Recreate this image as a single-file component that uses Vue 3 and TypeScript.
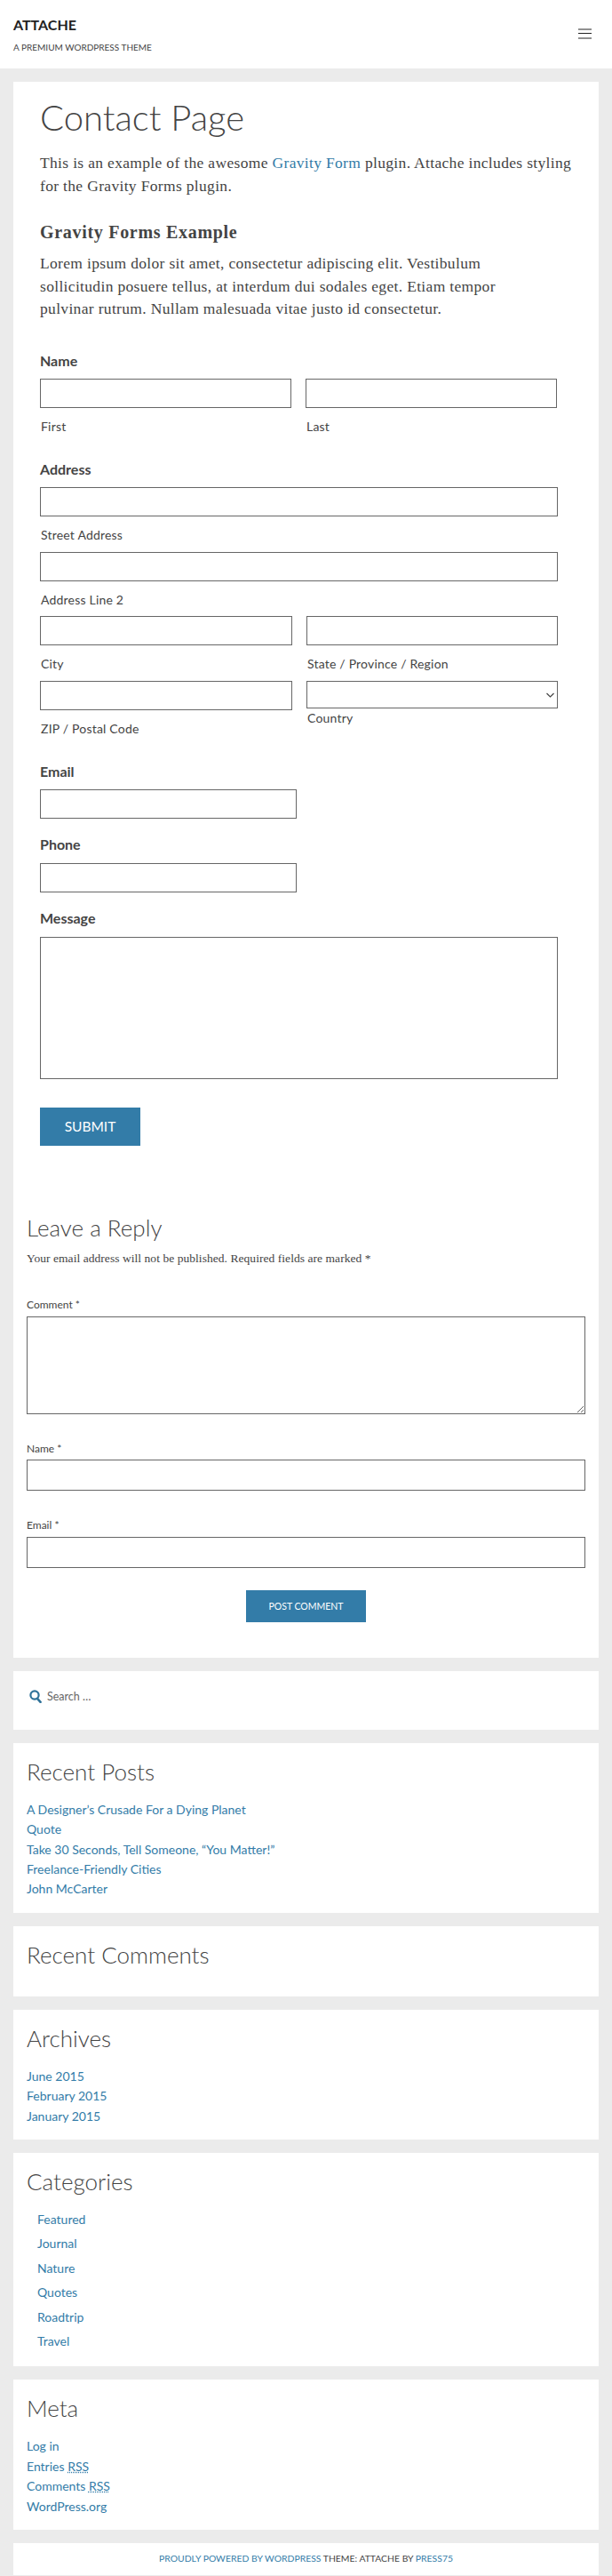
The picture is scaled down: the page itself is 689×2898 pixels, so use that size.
<script setup lang="ts">
const recentPosts: string[] = [
  'A Designer’s Crusade For a Dying Planet',
  'Quote',
  'Take 30 Seconds, Tell Someone, “You Matter!”',
  'Freelance-Friendly Cities',
  'John McCarter'
]
const archives: string[] = ['June 2015', 'February 2015', 'January 2015']
const categories: string[] = ['Featured', 'Journal', 'Nature', 'Quotes', 'Roadtrip', 'Travel']
</script>

<template>
  <div class="page">
    <header class="site-header">
      <div>
        <div class="site-title">ATTACHE</div>
        <div class="site-tagline">A PREMIUM WORDPRESS THEME</div>
      </div>
      <svg class="menu-icon" width="15" height="12" viewBox="0 0 15 12">
        <path d="M0 1h15M0 5.500h15M0 11h15" stroke="#222" fill="none" />
      </svg>
    </header>

    <main class="content">
      <section class="card main-card">
        <article class="entry">
          <h1>Contact Page</h1>
          <p class="intro">
            This is an example of the awesome <a href="#">Gravity Form</a> plugin. Attache includes styling<br />
            for the Gravity Forms plugin.
          </p>
          <h3>Gravity Forms Example</h3>
          <p class="lorem">
            Lorem ipsum dolor sit amet, consectetur adipiscing elit. Vestibulum sollicitudin posuere tellus, at
            interdum dui sodales eget. Etiam tempor pulvinar rutrum. Nullam malesuada vitae justo id consectetur.
          </p>

          <form class="gform" @submit.prevent>
            <!-- Name -->
            <div class="gf-label first">Name</div>
            <div class="two-col name-row">
              <div>
                <input type="text" />
                <div class="sub">First</div>
              </div>
              <div>
                <input type="text" />
                <div class="sub">Last</div>
              </div>
            </div>

            <!-- Address -->
            <div class="gf-label">Address</div>
            <input type="text" />
            <div class="sub">Street Address</div>
            <input class="stacked" type="text" />
            <div class="sub">Address Line 2</div>
            <div class="two-col address-row">
              <div>
                <input type="text" />
                <div class="sub">City</div>
              </div>
              <div>
                <input type="text" />
                <div class="sub">State / Province / Region</div>
              </div>
              <div>
                <input type="text" />
                <div class="sub">ZIP / Postal Code</div>
              </div>
              <div>
                <div class="select-wrap">
                  <select></select>
                  <svg class="chevron" width="9" height="6" viewBox="0 0 9 6">
                    <path d="M.5 1l4 4 4-4" fill="none" stroke="#444" stroke-width="1.200" />
                  </svg>
                </div>
                <div class="sub country">Country</div>
              </div>
            </div>

            <div class="gf-label email-label">Email</div>
            <input class="half" type="text" />
            <div class="gf-label late">Phone</div>
            <input class="half" type="text" />
            <div class="gf-label late">Message</div>
            <textarea class="message"></textarea>
            <button class="submit" type="submit">SUBMIT</button>
          </form>
        </article>

        <div class="comments">
          <h3 class="reply-title">Leave a Reply</h3>
          <p class="notes">Your email address will not be published. Required fields are marked *</p>
          <label class="c-label comment-label">Comment *</label>
          <textarea class="comment-box"></textarea>
          <label class="c-label name-label">Name *</label>
          <input class="c-input" type="text" />
          <label class="c-label mail-label">Email *</label>
          <input class="c-input" type="text" />
          <div class="c-submit">
            <button type="button">POST COMMENT</button>
          </div>
        </div>
      </section>

      <section class="card search-card">
        <svg class="search-icon" width="14" height="15" viewBox="0 0 14 15">
          <circle cx="6" cy="6" r="4.600" fill="none" stroke="#2f7299" stroke-width="2.200" />
          <path d="M9 9.800l3.600 4" stroke="#2f7299" stroke-width="2.600" stroke-linecap="round" />
        </svg>
        <span>Search …</span>
      </section>

      <section class="card widget">
        <h2>Recent Posts</h2>
        <ul>
          <li v-for="post in recentPosts" :key="post"><a href="#">{{ post }}</a></li>
        </ul>
      </section>

      <section class="card widget no-list">
        <h2>Recent Comments</h2>
      </section>

      <section class="card widget">
        <h2>Archives</h2>
        <ul>
          <li v-for="month in archives" :key="month"><a href="#">{{ month }}</a></li>
        </ul>
      </section>

      <section class="card widget">
        <h2>Categories</h2>
        <ul class="cats">
          <li v-for="cat in categories" :key="cat"><a href="#">{{ cat }}</a></li>
        </ul>
      </section>

      <section class="card widget">
        <h2>Meta</h2>
        <ul>
          <li><a href="#">Log in</a></li>
          <li><a href="#">Entries <abbr>RSS</abbr></a></li>
          <li><a href="#">Comments <abbr>RSS</abbr></a></li>
          <li><a href="#">WordPress.org</a></li>
        </ul>
      </section>

      <footer class="card site-footer">
        <a href="#">PROUDLY POWERED BY WORDPRESS</a> THEME: ATTACHE BY <a href="#">PRESS75</a>
      </footer>
    </main>
  </div>
</template>

<style>
html,
body {
  margin: 0;
  background: #ebebeb;
}
</style>

<style scoped>
.page {
  font-family: Lato, "Liberation Sans", sans-serif;
  color: #444;
}

a {
  color: #337ca8;
  text-decoration: none;
}

input,
select,
textarea {
  display: block;
  box-sizing: border-box;
  width: 100%;
  margin: 0;
  border: 1px solid #666;
  border-radius: 0;
  background: #fff;
}

.site-header {
  height: 77px;
  box-sizing: border-box;
  background: #fff;
  padding: 19px 23px 0 15px;
  display: flex;
  justify-content: space-between;
}

.site-title {
  font-size: 16px;
  font-weight: 700;
  line-height: 18px;
  color: #222;
}

.site-tagline {
  font-size: 10px;
  line-height: 14px;
  margin-top: 9px;
  color: #444;
}

.menu-icon {
  margin-top: 13px;
}

.content {
  padding: 15px 15px 0;
  display: flex;
  flex-direction: column;
  gap: 15px;
}

.card {
  background: #fff;
  box-sizing: border-box;
}

.main-card {
  padding: 0 15px 40px;
}

.entry {
  padding: 16px 15px 0;
}

h1 {
  margin: 0;
  font-size: 40px;
  font-weight: 300;
  line-height: 48px;
  color: #444;
}

.intro,
.lorem {
  font-family: "Liberation Serif", serif;
  font-size: 17.500px;
  letter-spacing: 0.33px;
  line-height: 26px;
  margin: 14px 0 0;
}

.lorem {
  margin-top: 10px;
  width: 560px;
  line-height: 25.600px;
}

.entry h3 {
  font-family: "Liberation Serif", serif;
  font-size: 20px;
  letter-spacing: 0.7px;
  font-weight: 700;
  line-height: 26px;
  margin: 26px 0 0;
}

.gform {
  width: 583px;
}

.gform input {
  height: 33px;
}

.gf-label {
  font-size: 16px;
  font-weight: 700;
  line-height: 22px;
  margin: 16px 0 9px;
}

.gf-label.first {
  margin-top: 34px;
}

.gf-label.email-label {
  margin-top: 27px;
}

.gf-label.late {
  margin: 18px 0 10px;
}

.sub {
  font-size: 14px;
  line-height: 20px;
  margin: 11px 0 0 1px;
  letter-spacing: 0.2px;
}

.stacked {
  margin-top: 9px;
}

.two-col {
  display: grid;
  grid-template-columns: 284px 283px;
  column-gap: 16px;
}

.name-row {
  grid-template-columns: 283px 283px;
  margin-bottom: 27px;
}

.address-row {
  margin-top: 8px;
  row-gap: 9px;
}

.select-wrap {
  position: relative;
}

.select-wrap select {
  height: 31px;
  appearance: none;
}

.chevron {
  position: absolute;
  right: 4px;
  top: 13px;
}

.sub.country {
  margin-top: 1px;
}

.half {
  width: 289px;
}

textarea {
  resize: vertical;
}

.message {
  height: 160px;
  resize: none;
}

.submit {
  display: block;
  width: 113px;
  height: 43px;
  margin-top: 32px;
  padding: 0;
  border: 0;
  background: #337ca8;
  color: #fff;
  font-family: Lato, sans-serif;
  font-size: 15.500px;
}

.comments {
  padding-top: 76px;
}

.reply-title {
  font-size: 26px;
  font-weight: 300;
  line-height: 32px;
  margin: 0;
  color: #444;
}

.notes {
  font-family: "Liberation Serif", serif;
  font-size: 13.500px;
  letter-spacing: 0.05px;
  line-height: 20px;
  margin: 9px 0 0;
}

.c-label {
  display: block;
  font-size: 12px;
  line-height: 16px;
}

.comment-label {
  margin-top: 34px;
  margin-bottom: 5px;
}

.comment-box {
  height: 110px;
}

.name-label {
  margin-top: 31px;
  margin-bottom: 4px;
}

.mail-label {
  margin-top: 31px;
  margin-bottom: 5px;
}

.c-input {
  height: 35px;
}

.c-submit {
  display: flex;
  justify-content: center;
  margin-top: 25px;
}

.c-submit button {
  width: 135px;
  height: 36px;
  padding: 0;
  border: 0;
  background: #337ca8;
  color: #fff;
  font-family: Lato, sans-serif;
  font-size: 10.500px;
}

.search-card {
  height: 66px;
  padding: 21px 18px 0;
  display: flex;
  align-items: flex-start;
  gap: 6px;
  font-size: 12.500px;
  line-height: 16px;
  color: #666;
}

.search-icon {
  flex: none;
}

.widget {
  padding: 16px 15px 15px;
}

.widget h2 {
  margin: 0;
  font-size: 26px;
  font-weight: 300;
  line-height: 32px;
  color: #444;
}

.widget.no-list {
  height: 79px;
}

.widget ul {
  list-style: none;
  margin: 16px 0 0;
  padding: 0;
  font-size: 14px;
  line-height: 22.400px;
}

.widget ul.cats {
  padding-left: 12px;
  line-height: 27.400px;
  margin-top: 13px;
}

abbr {
  text-decoration: underline dotted;
}

.site-footer {
  height: 36px;
  padding-top: 9px;
  text-align: center;
  font-size: 10.400px;
  line-height: 16px;
}
</style>
